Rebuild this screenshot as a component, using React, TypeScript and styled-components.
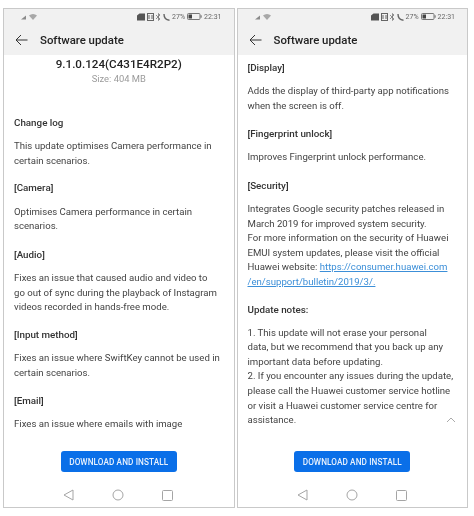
import styled, { createGlobalStyle } from "styled-components";
import { ReactNode } from "react";

const GlobalStyle = createGlobalStyle`
  html, body {
    margin: 0;
    padding: 0;
    background: #ffffff;
    font-family: Roboto, "Liberation Sans", sans-serif;
  }
`;

const Page = styled.div`
  width: 474px;
  height: 516px;
  box-sizing: border-box;
  padding: 8px 6px 8px 3px;
  display: flex;
  gap: 2px;
  overflow: hidden;
`;

const Phone = styled.div`
  flex: 1;
  min-width: 0;
  display: flex;
  flex-direction: column;
  background: #fff;
  border: 1px solid #c9c9c9;
  filter: blur(0.35px);
  overflow: hidden;
`;

const TopBar = styled.div`
  background: #f1f1f1;
  height: 46px;
  flex: none;
  display: flex;
  flex-direction: column;
`;

const StatusBar = styled.div`
  height: 15px;
  padding: 0 12px 0 17px;
  display: flex;
  align-items: center;
  justify-content: space-between;
  color: #666;
  font-size: 7px;
`;

const StatusGroup = styled.div`
  display: flex;
  align-items: center;
  gap: 2px;
`;

const Header = styled.div`
  flex: 1;
  display: flex;
  align-items: center;
  gap: 12px;
  padding: 0 0 0 11px;
`;

const Title = styled.div`
  font-size: 11.4px;
  font-weight: 500;
  color: #222;
`;

const Content = styled.div<{ $top: number }>`
  flex: 1;
  min-height: 0;
  position: relative;
  padding: ${(p) => p.$top}px 10px 0 10px;
  font-size: 9.6px;
  line-height: 14.6px;
  color: #444;
  overflow: hidden;
`;

const Version = styled.div`
  text-align: center;
  font-size: 11.65px;
  line-height: 15px;
  font-weight: 500;
  color: #222;
`;

const Size = styled.div`
  text-align: center;
  font-size: 9.4px;
  line-height: 13px;
  color: #9a9a9a;
`;

const Section = styled.div<{ $mt: number }>`
  margin-top: ${(p) => p.$mt}px;
`;

const SectionTitle = styled.div`
  font-size: 9.8px;
  font-weight: 500;
  color: #333;
  margin-bottom: 8.6px;
`;

const Link = styled.a`
  color: #3c8fd8;
  text-decoration: underline;
`;

const Collapse = styled.div`
  position: absolute;
  right: 11px;
  bottom: 19px;
  line-height: 0;
`;

const Footer = styled.div`
  flex: none;
  height: 39px;
  display: flex;
  justify-content: center;
  align-items: flex-start;
  padding-top: 9px;
  box-sizing: border-box;
`;

const InstallButton = styled.button`
  width: 116px;
  height: 21px;
  padding: 0;
  border: none;
  border-radius: 3px;
  background: #0a6fe8;
  color: #e8f1fd;
  font-family: inherit;
  font-size: 8.2px;
  font-weight: 500;
  letter-spacing: 0.1px;
`;

const NavBar = styled.div`
  flex: none;
  height: 26px;
  padding: 2px 0 0 59px;
  box-sizing: border-box;
  display: flex;
  align-items: center;
  gap: 38px;
`;

function Status() {
  return (
    <StatusBar>
      <StatusGroup>
        <svg width="18" height="9" viewBox="0 0 18 9">
          <path d="M0 7.5 5 3.5V7.5Z" fill="#8a8a8a" />
          <path d="M8 3.5a6 6 0 0 1 8 0L12 8Z" fill="#a8a8a8" />
        </svg>
      </StatusGroup>
      <StatusGroup>
        <svg width="8" height="8" viewBox="0 0 8 8">
          <path d="M0 7.5V2.5L2.5 .5H8V7.5Z" fill="#555" />
        </svg>
        <svg width="7" height="8" viewBox="0 0 7 8">
          <rect x=".5" y=".5" width="6" height="7" fill="none" stroke="#666" />
          <path d="M2 2V6M5 2V6" stroke="#666" />
        </svg>
        <svg width="5" height="8" viewBox="0 0 5 8">
          <path d="M0 2 4 6 2.5 7.5V.5L4 2 0 6" fill="none" stroke="#777" strokeWidth=".8" />
        </svg>
        <svg width="7" height="8" viewBox="0 0 7 8">
          <path d="M1 1C1 5 3 7 6.5 7.2" fill="none" stroke="#666" strokeWidth="1.4" />
        </svg>
        <span>27%</span>
        <svg width="15" height="7" viewBox="0 0 15 7">
          <rect x=".5" y=".5" width="12.5" height="6" rx="1" fill="none" stroke="#777" />
          <rect x="1.5" y="1.5" width="3.5" height="4" fill="#444" />
          <rect x="13.5" y="2.3" width="1.2" height="2.4" fill="#777" />
        </svg>
        <span>22:31</span>
      </StatusGroup>
    </StatusBar>
  );
}

function Top() {
  return (
    <TopBar>
      <Status />
      <Header>
        <svg width="13" height="12" viewBox="0 0 13 12">
          <path d="M12.5 6H1M6 1 1 6l5 5" fill="none" stroke="#333" strokeWidth="1" />
        </svg>
        <Title>Software update</Title>
      </Header>
    </TopBar>
  );
}

function Bottom() {
  return (
    <>
      <Footer>
        <InstallButton>DOWNLOAD AND INSTALL</InstallButton>
      </Footer>
      <NavBar>
        <svg width="11" height="12" viewBox="0 0 11 12">
          <path d="M10 1 1 6l9 5Z" fill="none" stroke="#a5a5a5" strokeWidth="1" />
        </svg>
        <svg width="12" height="12" viewBox="0 0 12 12">
          <circle cx="6" cy="6" r="5" fill="none" stroke="#a5a5a5" strokeWidth="1" />
        </svg>
        <svg width="11" height="11" viewBox="0 0 11 11">
          <rect x=".5" y=".5" width="10" height="10" rx="1" fill="none" stroke="#a5a5a5" strokeWidth="1" />
        </svg>
      </NavBar>
    </>
  );
}

function Block({ title, mt, children }: { title: string; mt: number; children: ReactNode }) {
  return (
    <Section $mt={mt}>
      <SectionTitle>{title}</SectionTitle>
      {children}
    </Section>
  );
}

export default function App() {
  return (
    <Page>
      <GlobalStyle />
      <Phone>
        <Top />
        <Content $top={2}>
          <Version>9.1.0.124(C431E4R2P2)</Version>
          <Size>Size: 404 MB</Size>
          <Block title="Change log" mt={31}>
            This update optimises Camera performance in
            <br />
            certain scenarios.
          </Block>
          <Block title="[Camera]" mt={13}>
            Optimises Camera performance in certain
            <br />
            scenarios.
          </Block>
          <Block title="[Audio]" mt={14}>
            Fixes an issue that caused audio and video to
            <br />
            go out of sync during the playback of Instagram
            <br />
            videos recorded in hands-free mode.
          </Block>
          <Block title="[Input method]" mt={13}>
            Fixes an issue where SwiftKey cannot be used in
            <br />
            certain scenarios.
          </Block>
          <Block title="[Email]" mt={14}>
            Fixes an issue where emails with image
          </Block>
        </Content>
        <Bottom />
      </Phone>
      <Phone>
        <Top />
        <Content $top={6}>
          <Block title="[Display]" mt={0}>
            Adds the display of third-party app notifications
            <br />
            when the screen is off.
          </Block>
          <Block title="[Fingerprint unlock]" mt={13.6}>
            Improves Fingerprint unlock performance.
          </Block>
          <Block title="[Security]" mt={14}>
            Integrates Google security patches released in
            <br />
            March 2019 for improved system security.
            <br />
            For more information on the security of Huawei
            <br />
            EMUI system updates, please visit the official
            <br />
            Huawei website: <Link>https://consumer.huawei.com</Link>
            <br />
            <Link>/en/support/bulletin/2019/3/.</Link>
          </Block>
          <Block title="Update notes:" mt={13}>
            1. This update will not erase your personal
            <br />
            data, but we recommend that you back up any
            <br />
            important data before updating.
            <br />
            2. If you encounter any issues during the update,
            <br />
            please call the Huawei customer service hotline
            <br />
            or visit a Huawei customer service centre for
            <br />
            assistance.
          </Block>
          <Collapse>
            <svg width="10" height="6" viewBox="0 0 10 6">
              <path d="M1 5 5 1l4 4" fill="none" stroke="#aaa" strokeWidth="1" />
            </svg>
          </Collapse>
        </Content>
        <Bottom />
      </Phone>
    </Page>
  );
}
